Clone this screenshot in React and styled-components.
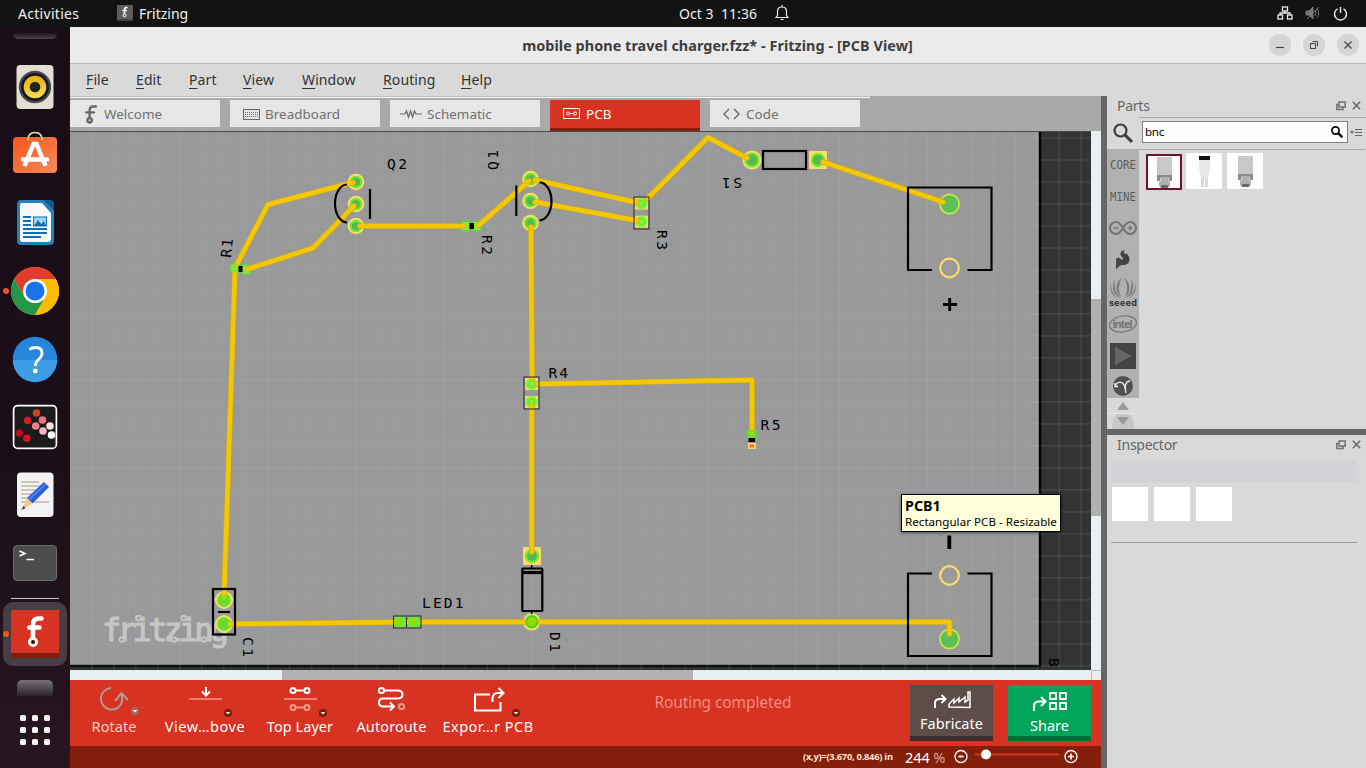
import React from 'react';
import styled, { createGlobalStyle } from 'styled-components';

const Global = createGlobalStyle`
  * { box-sizing: border-box; }
  body { margin: 0; background: #d9d9d9; font-family: "Noto Sans", "Open Sans", sans-serif; overflow: hidden; }
  svg { display: block; flex: none; }
`;

const Desktop = styled.div`
  width: 1366px; height: 768px; display: flex; flex-direction: column; overflow: hidden;
`;
const TopBar = styled.header`
  height: 27px; flex: none; background: #131313; color: #f2f2f2;
  display: grid; grid-template-columns: 117px 562px 1fr auto; align-items: center;
  font-size: 14px; line-height: 25px; padding: 0 18px 1px 0;
`;
const TopItem = styled.div`
  display: flex; align-items: center; gap: ${p => p.$gap || 6}px; padding-left: ${p => p.$pad || 0}px; white-space: pre;
  letter-spacing: ${p => p.$ls || 0}px;
`;
const Body = styled.div`display: flex; flex: 1; min-height: 0;`;
const Dock = styled.nav`
  width: 70px; flex: none; background: linear-gradient(#190e17 0%, #1a0f18 60%, #28151f 100%);
  display: flex; flex-direction: column; align-items: center;
`;
const DockCut = styled.div`
  width: ${p => p.$w}px; height: ${p => p.$h}px; margin: ${p => p.$m}; flex: none;
  border-radius: ${p => p.$tail ? '0 0 5px 5px' : '5px 5px 0 0'};
  background: ${p => p.$tail ? 'linear-gradient(#1f161e, #4b424a)' : 'linear-gradient(#77727a, #2c222a)'};
`;
const DockItem = styled.div`
  width: 70px; height: 68px; flex: none; display: flex; align-items: center; justify-content: center; position: relative;
`;
const RunDot = styled.i`
  position: absolute; left: ${p => p.$x}px; top: 50%; margin-top: -3px; width: 6px; height: 6px; border-radius: 50%; background: #e95420;
`;
const DockRule = styled.div`width: 48px; height: 1px; background: #c9c5c8; margin: 1px 0 3px; flex: none;`;
const ActiveTile = styled.div`
  width: 64px; height: 64px; border-radius: 10px; background: #463d45; flex: none;
  display: flex; align-items: center; justify-content: center; position: relative;
`;
const Window = styled.main`flex: 1; min-width: 0; display: flex; flex-direction: column; background: #d9d9d9;`;
const TitleBar = styled.div`
  height: 37px; flex: none; background: #ebebeb; border-bottom: 1px solid #b9b9b9;
  display: grid; grid-template-columns: 1fr auto; align-items: center; color: #3d3d3d;
`;
const Title = styled.div`
  font: bold 14.4px "Noto Sans", sans-serif; letter-spacing: 0.06px; text-align: center; white-space: pre; padding-left: 96px;
`;
const WinButtons = styled.div`display: flex; gap: 12px; padding-right: 7px;`;
const WinButton = styled.div`
  width: 22px; height: 22px; border-radius: 50%; background: #d5d5d5; display: grid; place-items: center;
`;
const MenuBar = styled.div`
  height: 32px; flex: none; display: flex; padding: 0 0 2px 16px; gap: 27px;
  align-items: center; font-size: 14px; color: #333;
`;
const MenuItem = styled.span`
  width: ${p => p.$w}px; letter-spacing: 0.1px; white-space: pre;
  u { text-underline-offset: 3px; }
`;
const Work = styled.div`display: flex; flex: 1; min-height: 0;`;
const Editor = styled.section`width: 1031px; flex: none; display: flex; flex-direction: column;`;
const TabBar = styled.div`
  height: 35px; flex: none; display: flex; gap: 10px; padding-top: 4px;
  background: linear-gradient(#bdbdbd 1px, #f8f8f8 1px) 0 0 / 800px 2px no-repeat, #a9a9a9;
`;
const Tab = styled.div`
  width: 150px; height: ${p => p.$on ? 31 : 27}px; display: flex; align-items: center; gap: ${p => p.$gap || 6}px;
  padding: ${p => p.$on ? '0 0 1px' : '1px 0 0'} ${p => p.$pad}px; font-size: 13.4px; letter-spacing: 0.05px;
  color: ${p => p.$on ? '#fff' : '#707070'}; background: ${p => p.$on ? '#d73222' : '#e6e6e6'};
  border-bottom: ${p => p.$on ? '3px solid #831f0b' : '0'};
`;
const CanvasGrid = styled.div`
  flex: none; display: grid; grid-template: 539px 10px / 1021px 10px; background: #e7eff2; position: relative;
`;
const VTrack = styled.div`padding-top: 168px;`;
const VThumb = styled.div`height: 217px; background: #b1b1b1;`;
const HTrack = styled.div`padding-left: 212px;`;
const HThumb = styled.div`width: 411px; height: 10px; background: #b1b1b1;`;
const Corner = styled.div`background: #eee; border-left: 1px solid #bbb; border-top: 1px solid #bbb;`;
const Tooltip = styled.div`
  position: absolute; left: 831px; top: 363px; width: 160px; height: 38px; background: #ffffdc; border: 1px solid #000;
  padding: 3px 0 0 3px; color: #000; font: 11.6px/15px "Noto Sans", sans-serif; white-space: nowrap; letter-spacing: 0.02px;
  box-shadow: 0 1px 3px rgba(0,0,0,.5);
  b { display: block; font-size: 14.3px; line-height: 16px; letter-spacing: 0; }
`;
const ToolBar = styled.div`
  height: 66px; flex: none; background: #d73222; color: #fff; display: grid;
  grid-template-columns: 88px 94px 96px 87px 106px 364px 1fr; padding-right: 10px;
`;
const Tool = styled.div`
  display: flex; flex-direction: column; align-items: center; font-size: 14.5px; line-height: 18px; padding-top: 2px; white-space: nowrap;
  letter-spacing: ${p => p.$ls || 0.05}px; color: ${p => p.$off ? '#f2cfca' : '#fff'};
`;
const Message = styled.div`
  color: #ef8e7f; font-size: 15.5px; line-height: 22px; padding-top: 11px; text-align: center; letter-spacing: -0.1px; white-space: nowrap;
`;
const BigButtons = styled.div`display: flex; gap: 15px; padding: 5px 0 0 5px;`;
const BigButton = styled.div`
  width: 83px; height: 56px; background: ${p => p.$bg}; border-bottom: 5px solid ${p => p.$edge};
  display: flex; flex-direction: column; align-items: center; font-size: 14.5px; line-height: 20px; gap: ${p => p.$gap}px; padding-top: 5px;
`;
const StatusBar = styled.div`
  height: 22px; flex: none; background: #831f0a; color: #fff; display: flex; justify-content: flex-end; align-items: center;
  padding: 0 22px 1px 0;
`;
const Coords = styled.span`font: bold 9.3px "Open Sans", sans-serif; color: #fbe3d3; width: 102px; white-space: nowrap; letter-spacing: -0.25px;`;
const ZoomValue = styled.span`
  font-size: 14.5px; line-height: 20px; width: 49px; white-space: pre; letter-spacing: -0.1px;
  i { font-style: normal; color: #dda99b; }
`;
const Splitter = styled.div`width: 6px; flex: none; background: #666;`;
const Side = styled.aside`flex: 1; display: flex; flex-direction: column; min-width: 0;`;
const PanelHead = styled.div`
  height: ${p => p.$h}px; flex: none; display: flex; justify-content: space-between; align-items: center; padding: 0 5px ${p => p.$pb}px 10px;
  font-size: 14px; letter-spacing: -0.25px; color: #666;
`;
const PartsBody = styled.div`height: 312px; flex: none; display: flex;`;
const Bins = styled.div`width: 32px; flex: none; display: flex; flex-direction: column; background: #b1b1b1;`;
const Bin = styled.div`
  height: ${p => p.$h || 32}px; flex: none; display: grid; place-items: center; overflow: hidden;
  background: ${p => p.$on ? '#d9d9d9' : 'transparent'}; padding-bottom: ${p => p.$on ? 0 : 2}px;
`;
const PartsMain = styled.div`flex: 1; border-top: 1px solid #aaa;`;
const SearchRow = styled.div`
  height: 32px; padding: 3px 3px 0; display: flex; border-bottom: 1px solid #aaa; margin-right: 3px;
`;
const SearchBox = styled.div`
  width: 206px; height: 22px; border: 1px solid #808080; background: #fdfdfd; display: flex; align-items: center;
  justify-content: space-between; padding: 0 4px 1px 2px; font: 11.5px "Noto Sans", sans-serif; letter-spacing: -0.2px; color: #000; flex: none;
`;
const Thumbs = styled.div`display: flex; gap: ${p => p.$gap}px; padding: ${p => p.$pad};`;
const Thumb = styled.div`
  width: 36px; height: ${p => p.$h || 36}px; background: #fff; border: ${p => p.$on ? '2px solid #72112f' : '0'};
  display: grid; place-items: center; overflow: hidden; transform: ${p => p.$on ? 'translate(1px, 1px)' : 'none'};
`;
const PanelGap = styled.div`height: 6px; flex: none; background: #666;`;
const InspectTitle = styled.div`height: 21px; background: #d2d2d8; margin: 0 10px 0 5px; flex: none;`;
const InspectRule = styled.div`height: 1px; background: #999; margin: 21px 9px 0 4px;`;

const FritzF = ({ w = 12, h = 19, c = '#666' }) => (
  <svg width={w} height={h} viewBox="0 0 12 19" fill="none" stroke={c} strokeWidth="2.3">
    <path d="M11 1.5H8.2Q4.6 1.5 4.6 5V13M1 7.4H9" strokeLinecap="round" /><circle cx="4.6" cy="15.3" r="2.2" />
  </svg>
);

const Rhythmbox = () => (
  <svg width="48" height="48" viewBox="0 0 48 48">
    <defs><linearGradient id="cone" x2="0" y2="1"><stop stopColor="#e5ae08" /><stop offset="1" stopColor="#fbdb55" /></linearGradient></defs>
    <rect x="5.5" y="2" width="37" height="44" rx="4" fill="#e3dfd4" />
    <circle cx="24" cy="24" r="16.2" fill="#4a4b52" /><circle cx="24" cy="24" r="14" fill="#17171f" />
    <circle cx="24" cy="24" r="11.3" fill="url(#cone)" /><circle cx="24" cy="24" r="5.3" fill="#222" />
  </svg>
);
const Software = () => (
  <svg width="48" height="48" viewBox="0 0 48 48">
    <defs><linearGradient id="sw" x2="1" y2="1"><stop stopColor="#f4561e" /><stop offset="1" stopColor="#f68a55" /></linearGradient></defs>
    <path d="M17 9Q17 1.5 24 1.5T31 9" fill="none" stroke="#f5dcb4" strokeWidth="1.6" />
    <rect x="2" y="6" width="44" height="36" rx="4" fill="url(#sw)" /><path d="M17 9V6M31 9V6" stroke="#f5dcb4" strokeWidth="1.6" />
    <path d="M13.5 35L22.5 13H25.5L34.5 35" fill="none" stroke="#fff" strokeWidth="4.500" />
    <path d="M12 28.500H36" stroke="#fff" strokeWidth="4.500" strokeLinecap="round" />
  </svg>
);
const Writer = () => (
  <svg width="48" height="48" viewBox="0 0 48 48">
    <path d="M10 1H33L43 11V42Q43 46 39 46H10Q6 46 6 42V5Q6 1 10 1Z" fill="#2480b8" />
    <path d="M33 1H39Q43 1 43 5V11Z" fill="#135a88" />
    <path d="M11 4H31L40 14V40Q40 43 37 43H11Q9 43 9 40V6Q9 4 11 4Z" fill="#f8f8f8" />
    <path d="M12 18H20M12 22H20M12 26H20M12 30H36M12 34H36M12 38H30" stroke="#0b72b5" strokeWidth="1.800" />
    <rect x="22.500" y="18" width="13" height="9" fill="#a8d4f0" stroke="#0b72b5" /><path d="M23 27L27 21L30 25L33 22L35 27Z" fill="#0b72b5" />
  </svg>
);
const Chrome = () => (
  <svg width="48" height="48" viewBox="0 0 48 48">
    <circle cx="24" cy="24" r="24" fill="#fbbc05" />
    <path d="M3.200 12A24 24 0 0 1 44.800 12H24L13.600 30Z" fill="#e23c2e" />
    <path d="M3.200 12L13.600 30A12 12 0 0 0 34.400 30L24 48A24 24 0 0 1 3.200 12Z" fill="#23964a" />
    <path d="M24 12H44.800A24 24 0 0 1 24 48L34.400 30Z" fill="#fbbc05" />
    <circle cx="24" cy="24" r="12" fill="#fff" /><circle cx="24" cy="24" r="9.500" fill="#1a73e8" />
  </svg>
);
const Help = () => (
  <svg width="48" height="48" viewBox="0 0 48 48">
    <circle cx="24" cy="24" r="22.200" fill="#2586dc" /><path d="M1.800 25H46.200A22.200 22.200 0 0 1 1.800 25Z" fill="#3c9de6" />
    <path d="M18.500 14.500Q20.500 12.500 24.500 12.500Q31 12.500 31 18Q31 21.500 27.500 24.500Q24.400 27 24.400 31" fill="none" stroke="#fff" strokeWidth="2.800" />
    <circle cx="24.300" cy="36" r="2.400" fill="#fff" />
  </svg>
);
const Molecules = () => (
  <svg width="48" height="48" viewBox="0 0 48 48">
    <rect x="2.600" y="2.600" width="42.800" height="42.800" rx="4" fill="#1b1b1b" stroke="#fff" strokeWidth="1.700" />
    {[[25.5, 10, '#d43d22'], [16.7, 17.5, '#d81a28'], [31.5, 17, '#ef7584'], [24.7, 23, '#f07f8a'], [39, 23, '#f9dfe4'], [32, 28, '#f7b2c2'], [40.5, 32, '#fff'], [8.5, 30, '#b90f18'], [15.8, 35.3, '#cf1422']].map((d, i) => <circle key={i} cx={d[0]} cy={d[1]} r="3.800" fill={d[2]} />)}
  </svg>
);
const TextEditor = () => (
  <svg width="48" height="48" viewBox="0 0 48 48">
    <rect x="6" y="1.500" width="36.500" height="44.500" rx="4" fill="#f3f3f3" />
    <path d="M10 11H28M10 15H30M10 19H26M10 23H24M10 27H20M10 31H38" stroke="#c9c7ba" strokeWidth="1.800" />
    <path d="M16 27L33 11L38 16L21.500 32.500Z" fill="#2c5fd6" /><path d="M17.500 29L35 13" stroke="#4f82f0" strokeWidth="1.800" />
    <path d="M16 27L21.500 32.500L11 38.500Z" fill="#f7c58c" /><path d="M12.500 35L14.500 37L10.500 39Z" fill="#333" />
  </svg>
);
const Terminal = () => (
  <svg width="48" height="48" viewBox="0 0 48 48">
    <rect x="2.500" y="6.500" width="43" height="35" rx="3.500" fill="#4c4c4c" stroke="#6b6b6b" />
    <path d="M8.500 12L14 14.500L8.500 17M15.500 20.500H23" fill="none" stroke="#fff" strokeWidth="1.600" />
  </svg>
);
const FritzingApp = () => (
  <svg width="48" height="48" viewBox="0 0 48 48">
    <rect width="48" height="48" fill="#d73222" /><rect y="43" width="48" height="5" fill="#821f0a" />
    <path d="M30.500 8.500H28Q22 8.500 22 14.500V30M18.200 17.500H28.500" fill="none" stroke="#fff" strokeWidth="4.600" strokeLinecap="round" />
    <circle cx="22" cy="32" r="5" fill="#fff" /><circle cx="22" cy="32" r="2" fill="#300" />
  </svg>
);

const Y = '#f3c702';
const Trace = ({ d }) => (
  <g fill="none" strokeLinecap="round" strokeLinejoin="round">
    <path d={d} stroke="#d3aa1d" strokeWidth="5.600" /><path d={d} stroke={Y} strokeWidth="4.400" />
  </g>
);
const Pad = ({ x, y, r = 8.3, sq, core = '#55b857' }) => (
  <g>
    {sq ? <rect x={x - 9} y={y - 9} width="18" height="18" fill="#ffdb66" /> : <circle cx={x} cy={y} r={r} fill="#ffdb66" />}
    <circle cx={x} cy={y} r={r - 2} fill="#6aea28" /><circle cx={x} cy={y} r={r - 4.2} fill={core} />
  </g>
);
const SmdPad = ({ x, y }) => (
  <g>
    <rect x={x - 6.5} y={y - 6} width="13" height="12" fill="#ffdb66" /><circle cx={x} cy={y} r="6" fill="#83f03a" />
    <circle cx={x} cy={y} r="3" fill="none" stroke="#5fe52b" strokeWidth="1" />
  </g>
);
const TinyPad = ({ x, y }) => (
  <g>
    <circle cx={x} cy={y} r="6" fill="#55d63f" opacity=".85" /><rect x={x - 3.5} y={y - 4} width="7" height="8" fill="#8ee544" />
  </g>
);
const Label = ({ x, y, children, t = '', w }) => (
  <text transform={`translate(${x} ${y}) ${t}`} fontFamily='"DejaVu Sans Mono", monospace' fontSize="14.500" textLength={w} lengthAdjust="spacing" fill="#000">{children}</text>
);
const range = (a, b, s) => { const r = []; for (let i = a; i < b; i += s) r.push(i); return r; };

const Board = () => (
  <svg width="1021" height="539" viewBox="70 131 1021 539">
    <rect x="70" y="131" width="1021" height="539" fill="#333" />
    <rect x="60" y="120" width="980" height="546" fill="#999" stroke="#000" strokeWidth="2.400" />
    <g stroke="#aec4cd" strokeOpacity=".12" strokeWidth="1.600">
      {range(91.7, 1091, 21.99).map(x => <path key={x} d={`M${x} 131V670`} />)}
      {range(138, 670, 21.99).map(y => <path key={y} d={`M70 ${y}H1091`} />)}
    </g>
    <path d="M70 131.500H1091" stroke="#4b4b4b" strokeWidth="1" />
    <text x="102" y="641" fontFamily='"DejaVu Sans Mono", monospace' fontSize="32" textLength="127" fill="#c6c6c6" stroke="#c6c6c6" strokeWidth="1.100">fritzing</text>
    <g fill="#999" stroke="#c6c6c6" strokeWidth="2">
      {[[121.7, 639.5], [174, 639.5], [204.3, 639.5], [138.5, 618], [183.7, 618]].map(p => <circle key={p[0]} cx={p[0]} cy={p[1]} r="2.300" />)}
    </g>

    {[182, 204, 226].map(y => <Pad key={y} x={356} y={y} />)}
    {[179, 201, 223].map(y => <Pad key={y} x={530.5} y={y} />)}
    <Pad x={752} y={160} r={9.6} /><Pad x={818} y={160} r={9} sq />
    <circle cx="949.500" cy="204" r="9.600" fill="#5bbf5b" stroke="#c3e84a" strokeWidth="1.800" />
    <circle cx="949.500" cy="268" r="9.300" fill="none" stroke="#ffdb66" strokeWidth="2.200" />
    <circle cx="949.500" cy="575.500" r="9.300" fill="none" stroke="#ffdb66" strokeWidth="2.200" />
    <circle cx="949.500" cy="639" r="9.600" fill="#5bbf5b" stroke="#c3e84a" strokeWidth="1.800" />
    <Pad x={532} y={556} sq r={9} />
    <Pad x={531.7} y={621.7} r={8.8} core="#92d800" />
    <Pad x={224} y={600} r={9} /><Pad x={224} y={624} r={9} />
    {[[641.5, 203.5], [641.5, 221.7], [531.7, 384], [531.7, 402]].map((p, i) => <SmdPad key={i} x={p[0]} y={p[1]} />)}
    <TinyPad x={235} y={268.5} /><TinyPad x={246} y={269.5} /><TinyPad x={466} y={226} /><TinyPad x={477} y={226} /><TinyPad x={752} y={434} />

    <Trace d="M353 182.500L268 204.500L235 268L224 598" />
    <Trace d="M354 206L313 248L248 269" />
    <Trace d="M360 226H463" />
    <Trace d="M479 225L529 181" />
    <Trace d="M535 180L637 202.500" /><Trace d="M535 202L637 220.500" />
    <Trace d="M647 199L708 137.500L747 158" />
    <Trace d="M823 162L943 202" />
    <Trace d="M531 227L532 378" />
    <Trace d="M537 384L752 380V433" />
    <Trace d="M531.700 406V552" />
    <Trace d="M229 624L402 622H949.500V634" />
    <g fill="#72e926">
      {[600, 623.5].map(y => <circle key={y} cx="224" cy={y} r="5.500" fillOpacity=".65" />)}
      <circle cx="531.700" cy="621.700" r="6.500" fill="#47d528" /><circle cx="531.700" cy="621.700" r="4.500" fill="#9bd800" />
      <rect x="394.500" y="617" width="11" height="10" /><rect x="408.500" y="617" width="11" height="10" />
    </g>
    <path d="M398 622H402M412 622H416" stroke="#9bd800" strokeWidth="4" />
    <g fill="none" stroke="#000" strokeWidth="2.200">
      <path d="M347 184.500A12 19 0 0 0 347 222.500M370 189V219" />
      <path d="M539.500 182.300A12 19 0 0 1 539.500 220.300M516.300 185.500V216" />
      <rect x="763" y="151" width="43" height="18" /><path d="M932 270H908V187.500H991.500V270H967.500M932 573.500H908V656H991.500V573.500H967.500" />
      <rect x="522.300" y="568.500" width="20" height="42.500" rx=".5" /><path d="M522 572.500H542.500" strokeWidth="3.200" />
      <path d="M531.700 565V568M531.700 611V614" strokeWidth="1.500" />
      <path d="M943 304.500H957M949.700 298V311" strokeWidth="2.800" /><path d="M949.300 535.500V549" strokeWidth="3.800" />
      <rect x="213" y="589" width="22" height="45.500" /><path d="M218 612H230" strokeWidth="2" />
    </g>
    <g fill="none" stroke="#2b2b2b" strokeWidth="1">
      <rect x="634" y="197" width="15" height="32" /><rect x="524" y="377" width="15" height="32" />
      <rect x="393.500" y="616" width="27.500" height="12" /><path d="M406.500 617V627" />
    </g>
    <circle cx="235" cy="268.500" r="4.500" fill="#7fe23c" opacity=".85" />
    <rect x="238.500" y="266" width="4" height="6" fill="#000" /><rect x="469.500" y="223" width="4.500" height="6" fill="#000" />
    <circle cx="752" cy="434.500" r="4.500" fill="#6ddc35" /><circle cx="752" cy="433" r="2" fill="#b6d51d" />
    <rect x="748.500" y="438" width="6.500" height="4" fill="#000" /><rect x="748" y="443" width="8" height="6" fill="#ffcf6b" /><rect x="749.500" y="444.500" width="4.500" height="3" fill="#ff7036" />

    <Label x={548.5} y={378} w={19.5}>R4</Label>
    <Label x={760.5} y={430} w={20}>R5</Label>
    <Label x={422} y={608} w={41.5}>LED1</Label>
    <Label x={387} y={169} w={20}>Q2</Label>
    <Label x={498} y={170} w={20} t="rotate(-90)">Q1</Label>
    <Label x={231} y={258} w={19} t="rotate(-84)">R1</Label>
    <Label x={482} y={235} w={20} t="rotate(90)">R2</Label>
    <Label x={656.5} y={230} w={20} t="rotate(90)">R3</Label>
    <Label x={742} y={177.5} w={20} t="rotate(180)">S1</Label>
    <Label x={549.5} y={632} w={20} t="rotate(90)">D1</Label>
    <Label x={243} y={637} w={20} t="rotate(90)">C1</Label>
    <Label x={1049} y={658} w={9} t="rotate(90)">B</Label>
  </svg>
);

const Arrow = ({ x, y, off }) => (
  <g stroke="none"><circle cx={x} cy={y} r="4" fill={off ? '#a9655e' : '#7a1c0a'} /><path d={`M${x - 2.3} ${y - 1}H${x + 2.3}L${x} ${y + 1.6}Z`} fill="#fff" /></g>
);
const Ico = ({ w, children }) => <svg width={w} height="35" viewBox={`0 0 ${w} 35`} fill="none" stroke="#fff" strokeWidth="2">{children}</svg>;
const Float = () => (
  <svg width="10" height="10" viewBox="0 0 10 10" fill="none" stroke="#707070" strokeWidth="1.500"><path d="M3 1H9.200V6H3ZM3 3.500H.8V8.500H7V6.500" /></svg>
);
const Close = () => <svg width="9" height="9" viewBox="0 0 9 9" stroke="#666" strokeWidth="1.500"><path d="M.8.8L8.200 8.200M8.200.8L.8 8.200" /></svg>;
const HeadIcons = styled.span`display: flex; gap: 6px; align-items: center;`;
const Lens = ({ s, c, w }) => <svg width={s} height={s} viewBox="0 0 20 20" fill="none" stroke={c} strokeWidth={w}><circle cx="7.500" cy="7.500" r="6" /><path d="M12 12L19 19" strokeWidth={w * 1.4} /></svg>;
const Bnc = () => (
  <svg width="32" height="32" viewBox="0 0 32 32"><rect x="9" y="1" width="15" height="19" fill="#c8c8c8" /><path d="M9 19H24V25H21V22H12V25H9Z" fill="#8c8c8c" /><path d="M12.500 21H20.500V25L22 26V30Q16.500 33 11 30V26L12.500 25Z" fill="#b0b0b0" /><ellipse cx="16.500" cy="30.500" rx="4" ry="1.800" fill="#666" /></svg>
);
const BncCable = () => (
  <svg width="32" height="32" viewBox="0 0 32 32"><path d="M11 4H22V12L20 24H13L11 12Z" fill="#e4e6e8" /><rect x="11" y="1" width="11" height="4" fill="#111" /><path d="M13 23H16V32H13ZM17 23H20V32H17Z" fill="#d8dadc" /></svg>
);
const BinWord = ({ children }) => (
  <svg width="32" height="28"><text x="3" y="18.500" textLength="26" lengthAdjust="spacingAndGlyphs" fontFamily='"DejaVu Sans Mono", monospace' fontSize="12" fill="#5c5c5c">{children}</text></svg>
);

export default function App() {
  return (
    <Desktop>
      <Global />
      <TopBar>
        <TopItem $pad={18} $ls={0.3}>Activities</TopItem>
        <TopItem><svg width="16" height="16" viewBox="0 0 16 16"><rect width="16" height="16" fill="#5c5c5c" /><rect y="14" width="16" height="2" fill="#444" /><path d="M10.500 2.500H9.500Q7.500 2.500 7.500 5V9M5.500 5.500H10" stroke="#fff" strokeWidth="1.600" fill="none" /><circle cx="7.500" cy="10.500" r="1.500" stroke="#fff" fill="none" /></svg>Fritzing</TopItem>
        <TopItem $gap={17} $ls={0.05}>Oct 3  11:36<svg width="16" height="18" viewBox="0 0 16 18" fill="none" stroke="#eee" strokeWidth="1.200"><path d="M2 13.500H14L12.500 11.500V7.500Q12.500 3 8 3T3.500 7.500V11.500ZM8 1V3M6.500 15.500H9.500" /></svg></TopItem>
        <TopItem $gap={12}>
          <svg width="16" height="14" viewBox="0 0 16 14" fill="none" stroke="#eee" strokeWidth="1.300"><rect x="5.500" y="1" width="5" height="4" /><rect x="1" y="9" width="4.500" height="4" /><rect x="10.500" y="9" width="4.500" height="4" /><path d="M8 5V7M3 9V7H13V9" /></svg>
          <svg width="16" height="16" viewBox="0 0 16 16" fill="none" stroke="#777"><path d="M1 6H4L8 2V14L4 10H1Z" fill="#777" /><path d="M10 5Q12 8 10 11M12 3Q15.500 8 12 13M2 14L14 2" /></svg>
          <svg width="15" height="15" viewBox="0 0 15 15" fill="none" stroke="#eee" strokeWidth="1.400"><path d="M4.500 2.800A6 6 0 1 0 10.500 2.800M7.500 1V7" /></svg>
        </TopItem>
      </TopBar>
      <Body>
        <Dock>
          <DockCut $tail $w={44} $h={6} $m="6px 0 14px" />
          <DockItem><Rhythmbox /></DockItem>
          <DockItem><Software /></DockItem>
          <DockItem><Writer /></DockItem>
          <DockItem><RunDot $x={3} /><Chrome /></DockItem>
          <DockItem><Help /></DockItem>
          <DockItem><Molecules /></DockItem>
          <DockItem><TextEditor /></DockItem>
          <DockItem><Terminal /></DockItem>
          <DockRule />
          <ActiveTile><RunDot $x={0} /><FritzingApp /></ActiveTile>
          <DockCut $w={36} $h={16} $m="14px 0 19px" />
          <svg width="30" height="30" viewBox="0 0 30 30" fill="#f2f2f2">{[0, 12, 24].map(y => [0, 12, 24].map(x => <rect key={x + '-' + y} x={x} y={y} width="6" height="6" rx="1.500" />))}</svg>
        </Dock>
        <Window>
          <TitleBar>
            <Title>mobile phone travel charger.fzz* - Fritzing - [PCB View]</Title>
            <WinButtons>
              <WinButton><svg width="10" height="10" stroke="#444" strokeWidth="1.200"><path d="M1 7.500H9" /></svg></WinButton>
              <WinButton><svg width="10" height="10" stroke="#444" fill="none"><rect x="1.500" y="3.500" width="5" height="5" /><path d="M3.500 1.500H8.500V6.500" /></svg></WinButton>
              <WinButton><svg width="10" height="10" stroke="#444" strokeWidth="1.300"><path d="M1.500 1.500L8.500 8.500M8.500 1.500L1.500 8.500" /></svg></WinButton>
            </WinButtons>
          </TitleBar>
          <MenuBar>
            {[['File', 23], ['Edit', 26], ['Part', 27], ['View', 32], ['Window', 54], ['Routing', 51], ['Help', 32]].map(([m, w]) => (
              <MenuItem key={m} $w={w}><u>{m[0]}</u>{m.slice(1)}</MenuItem>
            ))}
          </MenuBar>
          <Work>
            <Editor>
              <TabBar>
                <Tab $pad={15} $gap={7}><FritzF />Welcome</Tab>
                <Tab $pad={13} $gap={5}><svg width="17" height="11" viewBox="0 0 17 11" fill="none" stroke="#666"><rect x=".5" y=".5" width="16" height="10" /><path d="M2 3.500H15M2 5.500H15M2 7.500H15" strokeDasharray="1 1" /></svg>Breadboard</Tab>
                <Tab $pad={10} $gap={5}><svg width="22" height="10" viewBox="0 0 22 10" fill="none" stroke="#666" strokeWidth="1.200"><path d="M0 5H5L6.500 2L8.500 8L10.500 2L12.500 8L14.500 2L16 5H22" /></svg>Schematic</Tab>
                <Tab $on $pad={13} $gap={6}><svg width="17" height="11" viewBox="0 0 17 11" fill="none" stroke="#fff"><rect x=".5" y=".5" width="16" height="10" /><circle cx="5" cy="5.500" r="1.500" /><circle cx="12" cy="5.500" r="1.500" /><path d="M6.500 5.500H10.500" /></svg>PCB</Tab>
                <Tab $pad={13} $gap={6}><svg width="17" height="12" viewBox="0 0 17 12" fill="none" stroke="#666" strokeWidth="1.400"><path d="M6 1L1 6L6 11M11 1L16 6L11 11" /></svg>Code</Tab>
              </TabBar>
              <CanvasGrid>
                <Board />
                <VTrack><VThumb /></VTrack>
                <HTrack><HThumb /></HTrack>
                <Corner />
                <Tooltip><b>PCB1</b>Rectangular PCB - Resizable</Tooltip>
              </CanvasGrid>
              <ToolBar>
                <Tool $off><Ico w={88}><path d="M41 6A10.800 10.800 0 1 0 52 20V12M45 19L51.500 11L58 18" stroke="#b39b98" /><Arrow x={65} y={29} off /></Ico>Rotate</Tool>
                <Tool $ls={0.55}><Ico w={94}><path d="M31 17H64" stroke="#f59a83" strokeWidth="1.600" /><path d="M48 5V13M44 9.500L48 13.500L52 9.500" /><Arrow x={70} y={31} /></Ico>View…bove</Tool>
                <Tool $ls={0.05}><Ico w={96}><path d="M32 17H65" stroke="#f59a83" strokeWidth="1.600" /><circle cx="41" cy="8.500" r="2.500" /><circle cx="55" cy="8.500" r="2.500" /><path d="M44 8.500H52" /><g stroke="#f59a83"><circle cx="41" cy="25.500" r="2.500" /><circle cx="55" cy="25.500" r="2.500" /><path d="M44 25.500H52" /></g><Arrow x={71} y={31} /></Ico>Top Layer</Tool>
                <Tool $ls={0.1}><Ico w={87}><circle cx="33.500" cy="8.500" r="2.600" /><path d="M36 8.500H49.500Q54.500 8.500 54.500 12.500T49.500 16.500H35Q31 16.500 31 20.500T35 24.500H45M42 20.500L46 24.500L42 28.500" /><circle cx="53.500" cy="24.500" r="2.600" stroke="#f59a83" /></Ico>Autoroute</Tool>
                <Tool $ls={0.5}><Ico w={106}><path d="M55 12.500H40V28.500H65.500V20M57.500 20V17Q57.500 11 63 11H68M63.500 6L68.500 11L63.500 16" /><Arrow x={81} y={31} /></Ico>Expor…r PCB</Tool>
                <Message>Routing completed</Message>
                <BigButtons>
                  <BigButton $bg="#5d4c48" $edge="#3c2d2a" $gap={1}><svg width="40" height="22" viewBox="0 0 40 22" fill="none" stroke="#fff" strokeWidth="2"><path d="M3 18V13Q3 9 8 9H13M9.500 5L13.500 9L9.500 13" /><path d="M17 17V14L22 9V13L27 8V12L33 7V12L36 10V2H38V17.500Z" strokeWidth="1.500" /></svg>Fabricate</BigButton>
                  <BigButton $bg="#00a55a" $edge="#006f38" $gap={3}><svg width="36" height="22" viewBox="0 0 36 22" fill="none" stroke="#fff" strokeWidth="2.200"><path d="M2 21V16Q2 11.500 7 11.500H13M9 7L13.500 11.500L9 16" /><path d="M18 3H24V9H18ZM28 3H34V9H28ZM18 13H24V19H18ZM28 13H34V19H28Z" strokeWidth="1.800" /></svg>Share</BigButton>
                </BigButtons>
              </ToolBar>
              <StatusBar>
                <Coords>(x,y)=(3.670, 0.846) in</Coords>
                <ZoomValue>244 <i>%</i></ZoomValue>
                <svg width="125" height="20" viewBox="954 0 125 20" fill="none" stroke="#fff" strokeWidth="1.300"><circle cx="961" cy="9.500" r="6" /><path d="M958.500 9.500H963.500" strokeWidth="1.800" /><path d="M975 7.500H1059" stroke="#d73222" strokeWidth="1.800" /><circle cx="986" cy="7.500" r="5" fill="#fff" stroke="none" /><circle cx="1071" cy="9.500" r="6" /><path d="M1068 9.500H1074M1071 6.500V12.500" strokeWidth="1.600" /></svg>
              </StatusBar>
            </Editor>
            <Splitter />
            <Side>
              <PanelHead $h={21} $pb={2}>Parts<HeadIcons><Float /><Close /></HeadIcons></PanelHead>
              <PartsBody>
                <Bins>
                  <Bin $on><Lens s={20} c="#3c3c3c" w={2.2} /></Bin>
                  <Bin><BinWord>CORE</BinWord></Bin>
                  <Bin><BinWord>MINE</BinWord></Bin>
                  <Bin><svg width="32" height="20" viewBox="0 0 32 20" fill="none" stroke="#747474" strokeWidth="2.200"><path d="M16 10Q12.500 4 9 4A6 6 0 0 0 9 16Q12.500 16 16 10Q19.500 4 23 4A6 6 0 0 1 23 16Q19.500 16 16 10Z" /><path d="M6.500 10H11.500M20.500 10H25.500M23 7.500V12.500" strokeWidth="1.500" /></svg></Bin>
                  <Bin><svg width="16" height="22" viewBox="0 0 16 22" fill="#444"><path d="M1 21V10Q3 7 5.500 10Q8 12 8 9Q4 6 6 3Q7 1 10 1Q8 3 9.500 4.500Q11 6 11 4Q15 7 14.500 11Q14 16 8 16Q4 16 1 21Z" /></svg></Bin>
                  <Bin><svg width="32" height="30" viewBox="0 0 32 30"><g fill="#7b7b7b"><path d="M15 0Q4 11 14.500 21Q9 11 15 0ZM17 0Q28 11 17.500 21Q23 11 17 0ZM8 2Q2 15 13 21Q6 14 8 2ZM24 2Q30 15 19 21Q26 14 24 2ZM3 6Q2 17 10 21Q4 15 3 6ZM29 6Q30 17 22 21Q28 15 29 6Z" /></g><text x="2" y="29" textLength="28" fontFamily="Inter, sans-serif" fontWeight="700" fontSize="9" fill="#333">seeed</text></svg></Bin>
                  <Bin><svg width="32" height="24" viewBox="0 0 32 24"><ellipse cx="16" cy="12" rx="13.500" ry="8" transform="rotate(-9 16 12)" fill="none" stroke="#777" strokeWidth="1.300" /><text x="5.500" y="16" textLength="20" fontFamily="Open Sans, sans-serif" fontWeight="700" fontSize="11" fill="#777">intel</text></svg></Bin>
                  <Bin><svg width="26" height="26"><rect width="26" height="26" fill="#434343" /><path d="M5 4L22 13L5 22Z" fill="#666" /></svg></Bin>
                  <Bin $h={25}><svg width="20" height="23" viewBox="0 0 20 23"><circle cx="10" cy="13" r="10" fill="#505050" /><path d="M2 13Q5 7.500 9.500 10M2 10V13.500H5M17 8Q10.500 8.500 13 20M9.500 10Q12 12 12 16" fill="none" stroke="#eee" strokeWidth="1.300" /></svg></Bin>
                  <Bin $on $h={31}><svg width="32" height="31"><path d="M5 31Q5 17 12 16H20Q27 17 27 31Z" fill="#c6c6c6" /><path d="M0 15.500H32" stroke="#e6e6e6" /><path d="M10 12L16 4L22 12ZM10 19L16 27L22 19Z" fill="#999" /></svg></Bin>
                </Bins>
                <PartsMain>
                  <SearchRow><SearchBox>bnc<Lens s={12} c="#000" w={2.8} /></SearchBox><svg width="14" height="22" fill="#666"><path d="M2 10H6L4 13Z" /><path d="M7 8.500H14M7 11.500H14M7 14.500H14" stroke="#666" /></svg></SearchRow>
                  <Thumbs $gap={5} $pad="3px 6px"><Thumb $on><Bnc /></Thumb><Thumb><BncCable /></Thumb><Thumb><Bnc /></Thumb></Thumbs>
                </PartsMain>
              </PartsBody>
              <PanelGap />
              <PanelHead $h={26} $pb={7}>Inspector<HeadIcons><Float /><Close /></HeadIcons></PanelHead>
              <InspectTitle />
              <Thumbs $gap={6} $pad="5px 5px 0"><Thumb $h={34} /><Thumb $h={34} /><Thumb $h={34} /></Thumbs>
              <InspectRule />
            </Side>
          </Work>
        </Window>
      </Body>
    </Desktop>
  );
}
